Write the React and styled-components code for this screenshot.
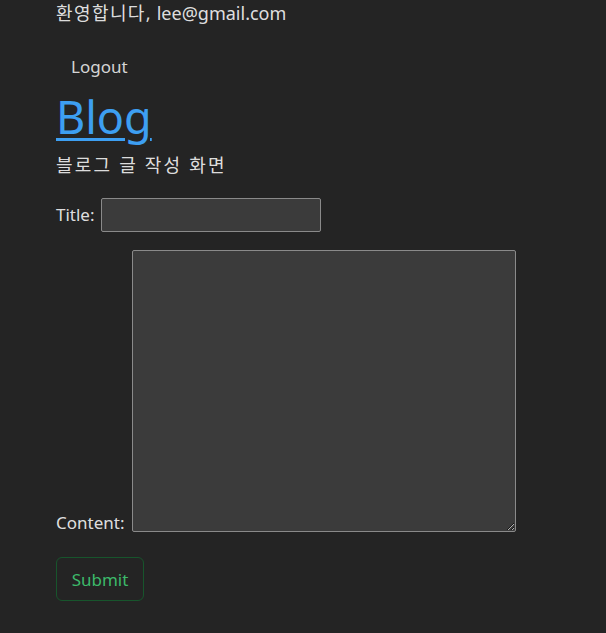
import React, { useState } from 'react';
import styled, { createGlobalStyle } from 'styled-components';

const GlobalStyle = createGlobalStyle`
  html, body {
    margin: 0;
    background: #242424;
    color: rgba(255, 255, 255, 0.87);
    font-family: "Noto Sans", "Noto Sans CJK KR", sans-serif;
  }
`;

const Page = styled.div`
  padding: 0 56px;
  font-size: 17px;
`;

const Welcome = styled.div`
  font-size: 18px;
  line-height: 26px;
`;

const Hangul = styled.span`
  letter-spacing: ${(p) => p.$spacing || '1.4px'};
`;

const LogoutButton = styled.button`
  margin-top: 23px;
  padding: 6px 15px;
  background: transparent;
  border: none;
  color: rgba(255, 255, 255, 0.82);
  font-family: inherit;
  font-size: 17px;
  cursor: pointer;
`;

const Heading = styled.h1`
  margin: 5px 0 0;
  font-size: 45px;
  font-weight: 400;
  line-height: 56px;

  a {
    color: #3d9ff2;
    text-decoration: underline;
    text-underline-offset: 4px;
    text-decoration-thickness: 3px;
  }
`;

const Subtitle = styled.div`
  margin-top: 7px;
  font-size: 18px;
  line-height: 26px;
`;

const Form = styled.form`
  margin-top: 20px;
  display: flex;
  flex-direction: column;
  align-items: flex-start;
  gap: 18px;
`;

const Field = styled.label`
  display: flex;
  align-items: ${(p) => (p.$bottom ? 'flex-end' : 'center')};
  gap: ${(p) => (p.$bottom ? '8px' : '6px')};
`;

const TextInput = styled.input`
  width: 220px;
  height: 34px;
  box-sizing: border-box;
  background: #3b3b3b;
  border: 1px solid #8a8a8a;
  border-radius: 2px;
  color: #fff;
  font-family: inherit;
  font-size: 15px;
`;

const TextArea = styled.textarea`
  width: 384px;
  height: 282px;
  box-sizing: border-box;
  background: #3b3b3b;
  border: 1px solid #8a8a8a;
  border-radius: 2px;
  color: #fff;
  font-family: inherit;
  font-size: 15px;
`;

const SubmitButton = styled.button`
  margin-top: 7px;
  width: 88px;
  height: 44px;
  background: transparent;
  border: 1px solid #17552c;
  border-radius: 6px;
  color: #3cb96a;
  font-family: inherit;
  font-size: 17px;
  cursor: pointer;
`;

const FieldLabel = styled.span`
  line-height: 22px;
  margin-bottom: ${(p) => (p.$bottom ? '-2px' : '0')};
`;

export default function App() {
  const [title, setTitle] = useState('');
  const [content, setContent] = useState('');

  return (
    <Page>
      <GlobalStyle />
      <Welcome>
        <Hangul>환영합니다,</Hangul> lee@gmail.com
      </Welcome>
      <LogoutButton>Logout</LogoutButton>
      <Heading>
        <a href="#">Blog</a>
      </Heading>
      <Subtitle>
        <Hangul $spacing="2.2px">블로그 글 작성 화면</Hangul>
      </Subtitle>
      <Form onSubmit={(e) => e.preventDefault()}>
        <Field>
          <FieldLabel>Title:</FieldLabel>
          <TextInput value={title} onChange={(e) => setTitle(e.target.value)} />
        </Field>
        <Field $bottom>
          <FieldLabel $bottom>Content:</FieldLabel>
          <TextArea value={content} onChange={(e) => setContent(e.target.value)} />
        </Field>
        <SubmitButton type="submit">Submit</SubmitButton>
      </Form>
    </Page>
  );
}
